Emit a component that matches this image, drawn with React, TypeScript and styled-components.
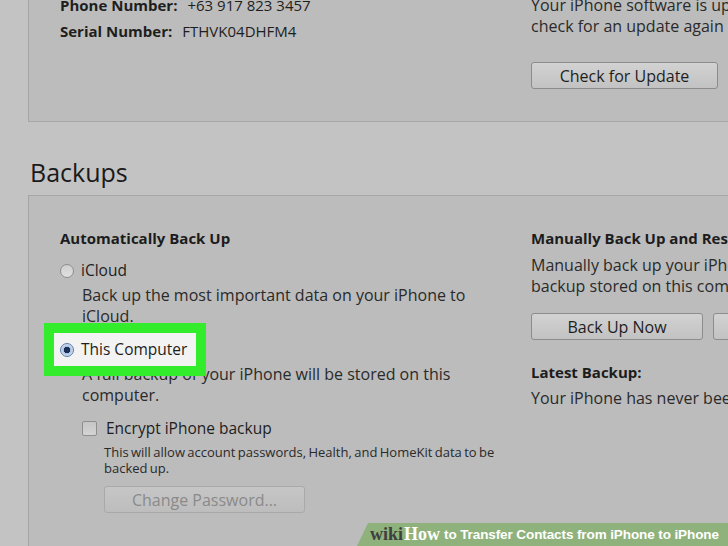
import React from "react";
import styled, { createGlobalStyle } from "styled-components";

const GlobalStyle = createGlobalStyle`
  html, body {
    margin: 0;
    padding: 0;
    background: #c3c3c3;
  }
  body {
    font-family: "Open Sans", "Noto Sans", sans-serif;
    color: #1e1e1e;
  }
`;

const Page = styled.div`
  position: relative;
  width: 728px;
  height: 546px;
  overflow: hidden;
  background: #c3c3c3;
`;

const Panel = styled.section<{ $top?: number }>`
  width: 760px;
  margin-left: 28px;
  margin-top: ${(p) => p.$top ?? 0}px;
  box-sizing: border-box;
  background: #bcbcbc;
  border: 1px solid #a6a6a6;
  display: grid;
  grid-template-columns: 471px 1fr;
  padding: 0 0 0 31px;
`;

const Column = styled.div`
  display: flex;
  flex-direction: column;
`;

const InfoLine = styled.div`
  font-size: 15px;
  line-height: 26px;
  white-space: nowrap;
  b {
    font-weight: 700;
    margin-right: 10px;
  }
`;

const Text = styled.div<{ $indent?: number }>`
  font-size: 16px;
  line-height: 21px;
  color: #2a2a2a;
  white-space: nowrap;
  padding-left: ${(p) => p.$indent ?? 0}px;
`;

const Heading = styled.h3`
  margin: 0;
  font-size: 15px;
  line-height: 21px;
  font-weight: 700;
  color: #1c1c1c;
  white-space: nowrap;
`;

const Title = styled.h2`
  margin: 35px 0 8px 30px;
  font-size: 25px;
  line-height: 30px;
  font-weight: 400;
  color: #1a1a1a;
`;

const Button = styled.button<{ $w: number; $disabled?: boolean }>`
  width: ${(p) => p.$w}px;
  height: 27px;
  box-sizing: border-box;
  border: 1px solid ${(p) => (p.$disabled ? "#a9a9a9" : "#8c8c8c")};
  border-radius: 3px;
  background: ${(p) =>
    p.$disabled
      ? "linear-gradient(#c6c6c6, #bdbdbd)"
      : "linear-gradient(#d2d2d2, #c2c2c2)"};
  font-family: "Open Sans", "Noto Sans", sans-serif;
  font-size: 16px;
  color: ${(p) => (p.$disabled ? "#8a8a8a" : "#1e1e1e")};
  padding: 0;
  flex: none;
`;

const ButtonRow = styled.div`
  display: flex;
  gap: 10px;
`;

const OptionRow = styled.div`
  display: flex;
  align-items: center;
  gap: 7px;
  font-size: 15.5px;
  line-height: 21px;
  color: #1e1e1e;
  white-space: nowrap;
`;

const Radio = styled.span<{ $checked?: boolean }>`
  width: 14px;
  height: 14px;
  box-sizing: border-box;
  border-radius: 50%;
  border: 1px solid ${(p) => (p.$checked ? "#5a7aa8" : "#8e8e8e")};
  background: ${(p) =>
    p.$checked
      ? "radial-gradient(circle, #1b2f55 0 3px, #a9c2e3 3.5px, #dfe8f3 7px)"
      : "linear-gradient(#cfcfcf, #e0e0e0)"};
  flex: none;
`;

const Checkbox = styled.span`
  width: 15px;
  height: 15px;
  box-sizing: border-box;
  border: 1px solid #8e8e8e;
  border-radius: 2px;
  background: linear-gradient(#c6c6c6, #d4d4d4);
  flex: none;
`;

const Highlight = styled.div`
  position: relative;
  z-index: 1;
  align-self: flex-start;
  margin: -6px 0 -6px -6px;
  padding: 6px 9px 6px 6px;
  background: #f3f3f3;
  outline: 10px solid #33ec2c;
`;

const SmallText = styled.div`
  font-family: "Open Sans", "Noto Sans", sans-serif;
  font-size: 13px;
  line-height: 16px;
  word-spacing: -1px;
  color: #2a2a2a;
  white-space: nowrap;
  padding-left: 44px;
`;

const Banner = styled.div`
  position: absolute;
  right: 0;
  bottom: 0;
  width: 371px;
  height: 23px;
  background: #8fb27c;
  clip-path: polygon(11px 0, 100% 0, 100% 100%, 0 100%);
  display: flex;
  align-items: center;
  padding-left: 13px;
  box-sizing: border-box;
  white-space: nowrap;
`;

const Wiki = styled.span<{ $light?: boolean }>`
  font-family: "Liberation Serif", "DejaVu Serif", serif;
  font-weight: 700;
  font-size: 18px;
  color: ${(p) => (p.$light ? "#ffffff" : "#3e3e3e")};
  margin-right: ${(p) => (p.$light ? 4 : 1)}px;
`;

const BannerText = styled.span`
  font-family: "Liberation Sans", Arial, sans-serif;
  font-weight: 700;
  font-size: 13.5px;
  letter-spacing: -0.1px;
  color: #ffffff;
`;

export default function App() {
  return (
    <>
      <GlobalStyle />
      <Page>
        <Panel $top={-9}>
          <Column>
            <InfoLine>
              <b>Phone Number:</b>+63 917 823 3457
            </InfoLine>
            <InfoLine>
              <b>Serial Number:</b>FTHVK04DHFM4
            </InfoLine>
          </Column>
          <Column style={{ paddingTop: 3, paddingBottom: 32 }}>
            <Text>Your iPhone software is up to date. iTunes will automatically</Text>
            <Text>check for an update again on 2/18/2017.</Text>
            <ButtonRow style={{ marginTop: 25 }}>
              <Button $w={187}>Check for Update</Button>
            </ButtonRow>
          </Column>
        </Panel>

        <Title>Backups</Title>

        <Panel>
          <Column style={{ paddingTop: 32, paddingBottom: 40 }}>
            <Heading>Automatically Back Up</Heading>
            <OptionRow style={{ marginTop: 11 }}>
              <Radio />
              iCloud
            </OptionRow>
            <Text $indent={22} style={{ marginTop: 4 }}>
              Back up the most important data on your iPhone to
            </Text>
            <Text $indent={22}>iCloud.</Text>
            <Highlight style={{ marginTop: 6 }}>
              <OptionRow>
                <Radio $checked />
                This Computer
              </OptionRow>
            </Highlight>
            <Text $indent={22} style={{ marginTop: 4 }}>
              A full backup of your iPhone will be stored on this
            </Text>
            <Text $indent={22}>computer.</Text>
            <OptionRow style={{ marginTop: 12, paddingLeft: 22, gap: 9 }}>
              <Checkbox />
              Encrypt iPhone backup
            </OptionRow>
            <SmallText style={{ marginTop: 5 }}>
              This will allow account passwords, Health, and HomeKit data to be
            </SmallText>
            <SmallText>backed up.</SmallText>
            <ButtonRow style={{ marginTop: 10, paddingLeft: 44 }}>
              <Button $w={201} $disabled>
                Change Password...
              </Button>
            </ButtonRow>
          </Column>
          <Column style={{ paddingTop: 32 }}>
            <Heading>Manually Back Up and Restore</Heading>
            <Text style={{ marginTop: 6 }}>
              Manually back up your iPhone to this computer or restore a
            </Text>
            <Text>backup stored on this computer.</Text>
            <ButtonRow style={{ marginTop: 16 }}>
              <Button $w={172}>Back Up Now</Button>
              <Button $w={172}>Restore Backup...</Button>
            </ButtonRow>
            <Heading style={{ marginTop: 22 }}>Latest Backup:</Heading>
            <Text style={{ marginTop: 5 }}>Your iPhone has never been backed up to this computer.</Text>
          </Column>
        </Panel>

        <Banner>
          <Wiki>wiki</Wiki>
          <Wiki $light>How</Wiki>
          <BannerText>to Transfer Contacts from iPhone to iPhone</BannerText>
        </Banner>
      </Page>
    </>
  );
}
